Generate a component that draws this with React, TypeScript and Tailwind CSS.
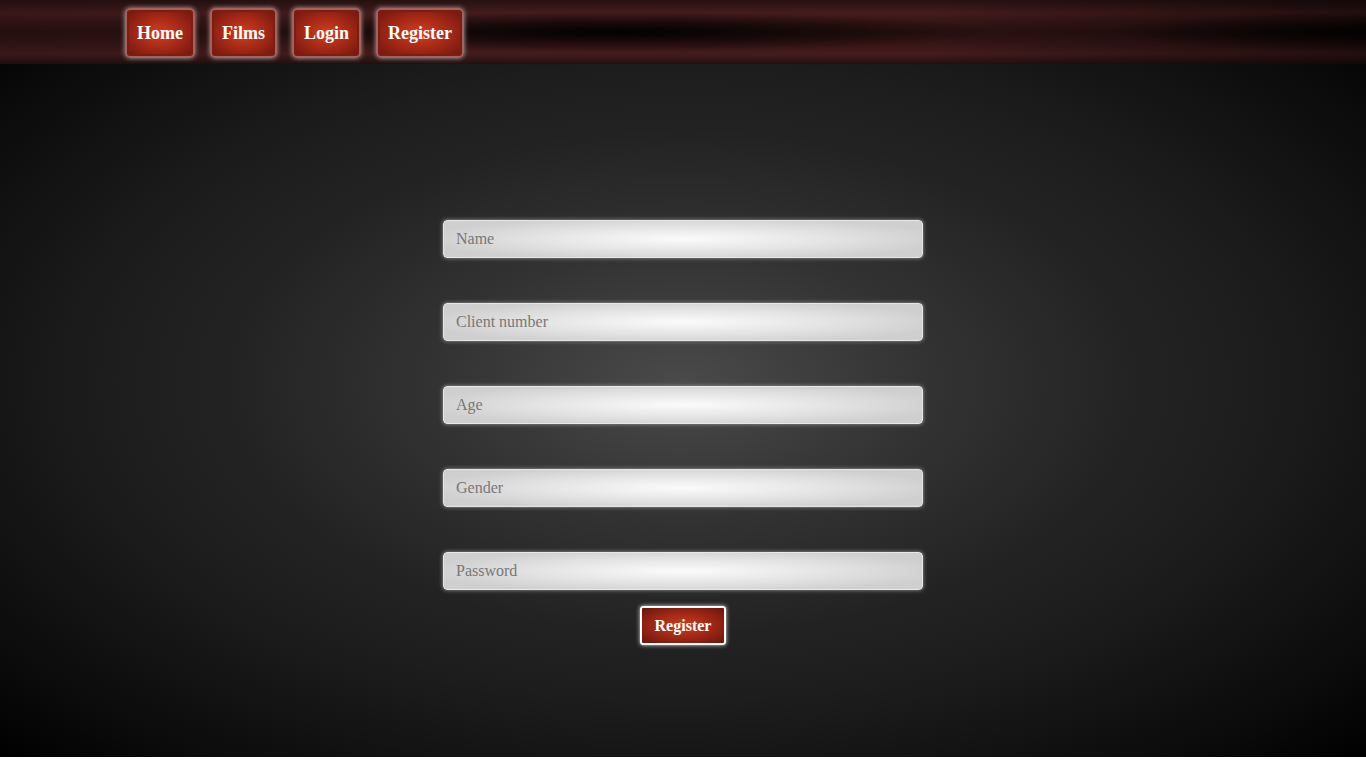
import React from 'react';

const navItems = ['Home', 'Films', 'Login', 'Register'];
const fields = ['Name', 'Client number', 'Age', 'Gender', 'Password'];

function NavButton({ label }: { label: string }) {
  return (
    <a
      href="#"
      className="flex items-center h-[50px] px-[10px] rounded-[5px] border-2 border-[#a4625c] text-white font-bold text-[18px] shadow-[0_0_5px_#aaa,inset_0_0_0_2px_#7c1c12] bg-[radial-gradient(ellipse_at_center,#d23f1f_0%,#a82a16_45%,#6e150e_100%)]"
    >
      {label}
    </a>
  );
}

export default function App() {
  return (
    <div className="font-['Liberation_Serif',serif] bg-white">
      <div className="h-[757px] flex flex-col">
        {/* header bar */}
        <header className="relative h-[64px] shrink-0 bg-[linear-gradient(180deg,#261111_0%,#451c1d_20%,#341515_36%,#2a1111_50%,#341515_66%,#451c1d_84%,#221010_100%)]">
          <div className="absolute inset-0 bg-[radial-gradient(ellipse_380px_20px_at_620px_32px,rgba(0,0,0,0.95),rgba(0,0,0,0)),radial-gradient(ellipse_260px_20px_at_1366px_32px,rgba(0,0,0,0.9),rgba(0,0,0,0)),linear-gradient(90deg,rgba(0,0,0,0.15)_0%,rgba(0,0,0,0)_40%,rgba(0,0,0,0)_68%,rgba(0,0,0,0.5)_100%)]" />
          <nav className="relative flex gap-[15px] pl-[125px] pt-[8px]">
            {navItems.map((n) => (
              <NavButton key={n} label={n} />
            ))}
          </nav>
        </header>

        {/* main */}
        <main className="flex-1 bg-[radial-gradient(ellipse_farthest-corner_at_50%_46%,#4a4a4a_0%,#333_25%,#222_48%,#1d1d1d_60%,#151515_72%,#0a0a0a_88%,#000_100%)]">
          <form className="flex flex-col items-center pt-[156px]" onSubmit={(e) => e.preventDefault()}>
            <div className="flex flex-col gap-[45px]">
              {fields.map((f) => (
                <input
                  key={f}
                  type={f === 'Password' ? 'password' : 'text'}
                  placeholder={f}
                  className="w-[480px] h-[38px] px-[12px] rounded-[4px] border border-[#e8e8e8] text-[16px] text-[#444] placeholder:text-[#777] outline-none shadow-[0_0_4px_#999] bg-[radial-gradient(ellipse_260px_22px_at_center,#fbfbfb_0%,#e4e4e4_55%,#cfcfcf_100%)]"
                />
              ))}
            </div>
            <button
              type="submit"
              className="mt-[16px] h-[39px] px-[13px] rounded-[3px] border-2 border-white text-white font-bold text-[16px] shadow-[0_0_4px_#ddd] bg-[radial-gradient(ellipse_at_center,#d03c1c_0%,#9a2614_55%,#6a140c_100%)]"
            >
              Register
            </button>
          </form>
        </main>
      </div>
    </div>
  );
}
